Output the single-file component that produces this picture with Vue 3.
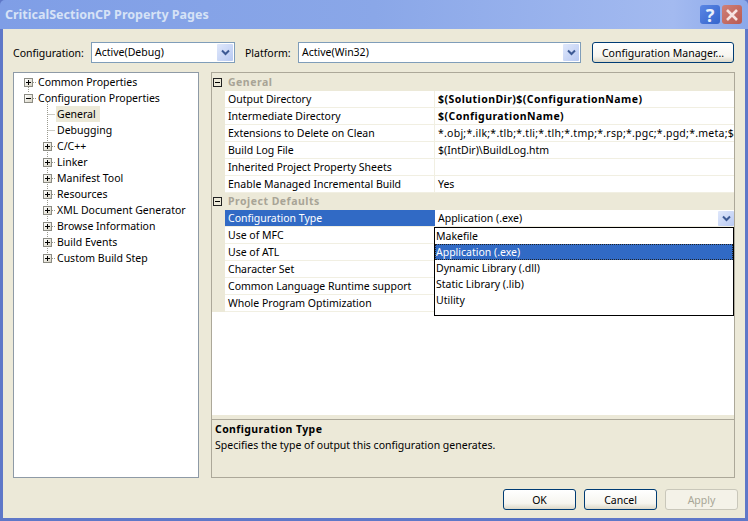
<script setup>
const tree = [
  { label: 'Common Properties', level: 0, exp: '+' },
  { label: 'Configuration Properties', level: 0, exp: '-' },
  { label: 'General', level: 1, selected: true },
  { label: 'Debugging', level: 1 },
  { label: 'C/C++', level: 1, exp: '+' },
  { label: 'Linker', level: 1, exp: '+' },
  { label: 'Manifest Tool', level: 1, exp: '+' },
  { label: 'Resources', level: 1, exp: '+' },
  { label: 'XML Document Generator', level: 1, exp: '+' },
  { label: 'Browse Information', level: 1, exp: '+' },
  { label: 'Build Events', level: 1, exp: '+' },
  { label: 'Custom Build Step', level: 1, exp: '+' },
]
const groups = [
  {
    name: 'General',
    rows: [
      { k: 'Output Directory', v: '$(SolutionDir)$(ConfigurationName)', bold: true },
      { k: 'Intermediate Directory', v: '$(ConfigurationName)', bold: true },
      { k: 'Extensions to Delete on Clean', v: '*.obj;*.ilk;*.tlb;*.tli;*.tlh;*.tmp;*.rsp;*.pgc;*.pgd;*.meta;$(TargetPath)', wide: true },
      { k: 'Build Log File', v: '$(IntDir)\\BuildLog.htm' },
      { k: 'Inherited Project Property Sheets', v: '' },
      { k: 'Enable Managed Incremental Build', v: 'Yes' },
    ],
  },
  {
    name: 'Project Defaults',
    rows: [
      { k: 'Configuration Type', v: 'Application (.exe)', active: true },
      { k: 'Use of MFC', v: '' },
      { k: 'Use of ATL', v: '' },
      { k: 'Character Set', v: '' },
      { k: 'Common Language Runtime support', v: '' },
      { k: 'Whole Program Optimization', v: '' },
    ],
  },
]
const options = ['Makefile', 'Application (.exe)', 'Dynamic Library (.dll)', 'Static Library (.lib)', 'Utility']
</script>

<template>
  <div class="dialog">
    <header class="titlebar">
      <span class="title">CriticalSectionCP Property Pages</span>
      <span class="capbtn help">?</span>
      <span class="capbtn close">
        <svg width="14" height="14" viewBox="0 0 14 14"><path d="M2 2 L12 12 M12 2 L2 12" stroke="#f6e4e2" stroke-width="2.6" fill="none" /></svg>
      </span>
    </header>
    <div class="client">
      <div class="config">
        <label class="lab lab1">Configuration:</label>
        <div class="combo c1">
          <span>Active(Debug)</span>
          <span class="arrow"><svg width="9" height="7" viewBox="0 0 9 7"><path d="M1 1.5 L4.5 5 L8 1.5" stroke="#3d5a94" stroke-width="2" fill="none" /></svg></span>
        </div>
        <label class="lab lab2">Platform:</label>
        <div class="combo c2">
          <span>Active(Win32)</span>
          <span class="arrow"><svg width="9" height="7" viewBox="0 0 9 7"><path d="M1 1.5 L4.5 5 L8 1.5" stroke="#3d5a94" stroke-width="2" fill="none" /></svg></span>
        </div>
        <button class="btn mgr">Configuration Manager...</button>
      </div>

      <div class="main">
        <nav class="tree">
          <svg class="lines" width="184" height="200">
            <g stroke="#9a9a8e" stroke-dasharray="1 1" fill="none">
              <path d="M14.5 12 V20 M19 9.5 H23 M19 25.5 H23" />
              <path d="M33.5 29 V185 M33.5 41.5 H41 M33.5 57.5 H41 M38 73.5 H41 M38 89.5 H41 M38 105.5 H41 M38 121.5 H41 M38 137.5 H41 M38 153.5 H41 M38 169.5 H41 M38 185.5 H41" />
            </g>
          </svg>
          <div v-for="n in tree" :key="n.label" class="node" :class="'lv' + n.level">
            <span class="exp-slot"><span v-if="n.exp" class="exp" :class="{ plus: n.exp === '+' }"></span></span>
            <span class="node-text" :class="{ sel: n.selected }">{{ n.label }}</span>
          </div>
        </nav>

        <section class="grid">
          <div class="list">
            <template v-for="g in groups" :key="g.name">
              <div class="cat">
                <span class="cat-gutter"><span class="minus"></span></span>
                <span class="cat-name">{{ g.name }}</span>
              </div>
              <div v-for="r in g.rows" :key="r.k" class="row">
                <span class="k" :class="{ active: r.active }">{{ r.k }}</span>
                <span class="v" :class="{ b: r.bold, wide: r.wide }">{{ r.v }}</span>
                <span v-if="r.active" class="arrow small"><svg width="9" height="7" viewBox="0 0 9 7"><path d="M1 1.5 L4.5 5 L8 1.5" stroke="#3d5a94" stroke-width="2" fill="none" /></svg></span>
              </div>
            </template>
          </div>
          <div class="desc">
            <div class="desc-title">Configuration Type</div>
            <div class="desc-text">Specifies the type of output this configuration generates.</div>
          </div>
          <ul class="drop">
            <li v-for="(o, i) in options" :key="o" :class="{ on: i === 1 }">{{ o }}</li>
          </ul>
        </section>
      </div>

      <footer class="foot">
        <button class="btn act">OK</button>
        <button class="btn act">Cancel</button>
        <button class="btn act dis">Apply</button>
      </footer>
    </div>
  </div>
</template>

<style scoped>
.dialog {
  width: 748px;
  height: 521px;
  display: flex;
  flex-direction: column;
  font: 10.5px/16px "Noto Sans", sans-serif;
  color: #000;
  background: #5f78c8;
  overflow: hidden;
}
.titlebar {
  height: 29px;
  flex: none;
  display: flex;
  align-items: center;
  padding: 0 6px 0 5px;
  background: linear-gradient(90deg, #7f9ee6 0, #8aa7e8 50%, #a3baf0 90%, #8ba8ea 100%);
  border-radius: 5px 5px 0 0;
}
.title {
  flex: 1;
  font-size: 12.5px;
  font-weight: 700;
  color: #d6e2f6;
  padding-top: 1px;
}
.capbtn {
  width: 20px;
  height: 19px;
  border-radius: 3px;
  display: flex;
  align-items: center;
  justify-content: center;
  font-weight: 700;
  font-size: 18px;
  color: #e8f0fc;
}
.help {
  background: linear-gradient(135deg, #5a86e4, #3464cc);
  margin-right: 2px;
}
.close {
  background: linear-gradient(135deg, #cf8078, #b95a52);
}
.client {
  flex: 1;
  margin: 0 3px 3px;
  padding: 12px 10px 0;
  background: #ece9d8;
  display: flex;
  flex-direction: column;
}
.config {
  display: flex;
  align-items: center;
  height: 22px;
}
.lab { flex: none; padding-top: 2px; }
.lab1 { width: 78px; }
.lab2 { width: 53px; margin-left: 10px; }
.combo {
  flex: none;
  height: 21px;
  box-sizing: border-box;
  border: 1px solid #7f9db9;
  background: #fff;
  display: flex;
  align-items: center;
  justify-content: space-between;
  padding: 0 1px 0 3px;
}
.c1 { width: 144px; }
.c2 { width: 283px; }
.arrow {
  width: 16px;
  height: 17px;
  background: linear-gradient(135deg, #e0e8fb, #b8c9f2);
  border-radius: 1px;
  display: flex;
  align-items: center;
  justify-content: center;
}
.btn {
  font: inherit;
  color: #000;
  padding: 1px 0 0;
  box-sizing: border-box;
  border: 1px solid #003c74;
  border-radius: 3px;
  background: linear-gradient(#fff 0, #f6f5ef 70%, #dcd8c8 100%);
}
.mgr {
  width: 142px;
  height: 21px;
  margin-left: 11px;
}
.main {
  display: flex;
  gap: 12px;
  margin-top: 9px;
  height: 406px;
  flex: none;
}
.tree {
  width: 186px;
  box-sizing: border-box;
  border: 1px solid #8e9aa6;
  background: #fff;
  padding-top: 1px;
  position: relative;
}
.lines {
  position: absolute;
  left: 0;
  top: 0;
}
.node {
  height: 16px;
  display: flex;
  align-items: center;
  position: relative;
}
.lv0 { padding-left: 10px; }
.lv1 { padding-left: 29px; }
.exp-slot {
  width: 14px;
  flex: none;
  display: flex;
}
.exp {
  width: 9px;
  height: 9px;
  box-sizing: border-box;
  border: 1px solid #8c8c84;
  background: linear-gradient(135deg, #fff, #d8d4c4);
  position: relative;
}
.exp::before {
  content: "";
  position: absolute;
  left: 1px;
  top: 3px;
  width: 5px;
  height: 1px;
  background: #000;
}
.exp.plus::after {
  content: "";
  position: absolute;
  left: 3px;
  top: 1px;
  width: 1px;
  height: 5px;
  background: #000;
}
.node-text {
  padding: 0 1px;
  margin-left: -1px;
  white-space: nowrap;
}
.sel {
  background: #ece9d8;
  padding: 0 4px 0 1px;
}
.grid {
  width: 524px;
  box-sizing: border-box;
  border: 1px solid #aca899;
  position: relative;
  background: #ece9d8;
  display: flex;
  flex-direction: column;
}
.list {
  height: 342px;
  flex: none;
  background: #fff;
  padding-top: 1px;
  box-sizing: border-box;
  position: relative;
  overflow: hidden;
}
.cat {
  height: 17px;
  display: flex;
  background: #ece9d8;
}
.list::before {
  content: "";
  position: absolute;
  left: 0;
  top: 0;
  width: 100%;
  height: 1px;
  background: #ece9d8;
}
.cat-gutter {
  width: 13px;
  flex: none;
  display: flex;
  align-items: center;
  padding-left: 1px;
  box-sizing: border-box;
}
.minus {
  width: 9px;
  height: 9px;
  box-sizing: border-box;
  border: 1px solid #222;
  position: relative;
}
.minus::before {
  content: "";
  position: absolute;
  left: 1px;
  top: 3px;
  width: 5px;
  height: 1px;
  background: #000;
}
.cat-name {
  font-weight: 700;
  color: #a8a496;
  padding-left: 3px;
  line-height: 16px;
  letter-spacing: 0.5px;
}
.row {
  height: 17px;
  display: flex;
  background: #fff;
  border-left: 13px solid #ece9d8;
  box-sizing: border-box;
  position: relative;
}
.k {
  width: 210px;
  flex: none;
  box-sizing: border-box;
  padding-left: 3px;
  height: 16px;
  border-right: 1px solid #f1efe2;
  white-space: nowrap;
}
.row::after {
  content: "";
  position: absolute;
  left: 0;
  right: 0;
  bottom: 0;
  height: 1px;
  background: #f1efe2;
}
.k.active {
  background: #316ac5;
  color: #fff;
  border-right-color: #316ac5;
}
.v {
  flex: 1;
  min-width: 0;
  padding-left: 3px;
  white-space: nowrap;
  overflow: hidden;
}
.v.b { font-weight: 700; letter-spacing: 0.45px; }
.v.wide { letter-spacing: 0.25px; }
.arrow.small {
  position: absolute;
  right: 0;
  top: 1px;
  height: 15px;
}
.desc {
  margin-top: 4px;
  flex: 1;
  border-top: 1px solid #aca899;
  padding: 1px 3px 0;
}
.desc-title { font-weight: 700; letter-spacing: 0.4px; }
.drop {
  position: absolute;
  left: 222px;
  top: 154px;
  width: 300px;
  height: 89px;
  box-sizing: border-box;
  margin: 0;
  padding: 0;
  list-style: none;
  background: #fff;
  border: 1px solid #000;
}
.drop li {
  height: 16px;
  padding-left: 1px;
}
.drop li.on {
  background: #316ac5;
  color: #fff;
  outline: 1px dotted #222;
  outline-offset: -1px;
}
.foot {
  display: flex;
  justify-content: flex-end;
  gap: 8px;
  margin-top: 11px;
  margin-right: -3px;
}
.act {
  width: 73px;
  height: 21px;
}
.dis {
  border-color: #c9c7ba;
  background: #f4f2e8;
  color: #a8a696;
}
</style>

<style>
html, body { margin: 0; background: #ece9d8; }
</style>
